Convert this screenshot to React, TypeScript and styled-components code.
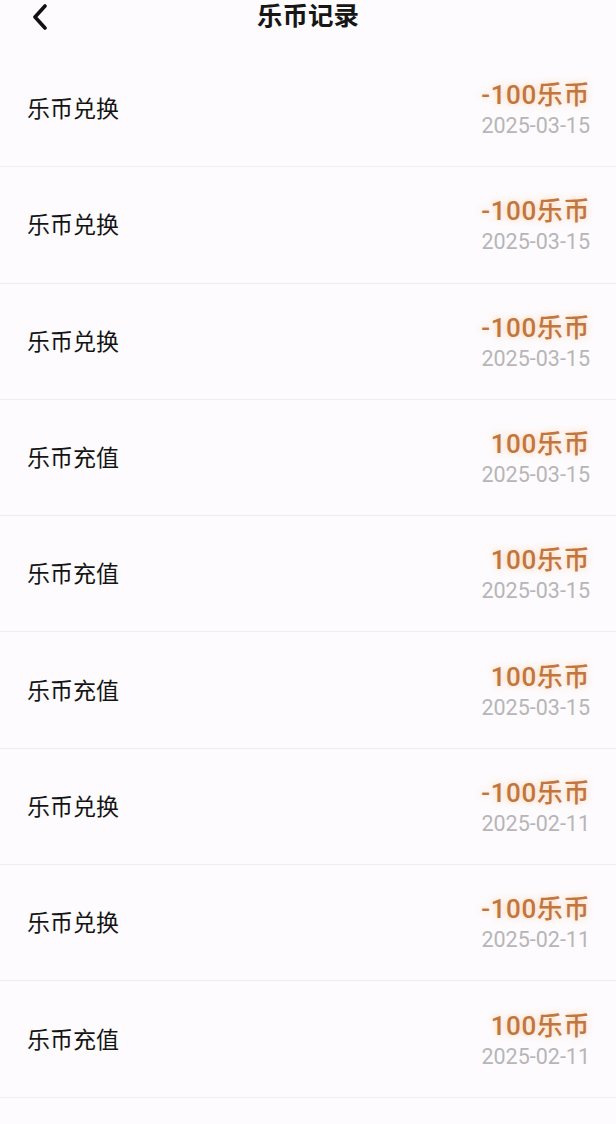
import React from "react";
import styled, { createGlobalStyle } from "styled-components";

const Global = createGlobalStyle`
  html, body { margin: 0; padding: 0; background: #fdfbfd; }
  body { font-family: Roboto, "Noto Sans CJK SC", sans-serif; }
`;

const Page = styled.div`
  width: 616px;
  min-height: 1124px;
  background: #fdfbfd;
  overflow: hidden;
`;

const Header = styled.header`
  position: relative;
  height: 51px;
  display: flex;
  align-items: flex-start;
  justify-content: center;
`;

const BackButton = styled.button`
  position: absolute;
  left: 26px;
  top: 2px;
  width: 28px;
  height: 30px;
  padding: 0;
  border: 0;
  background: transparent;
  display: flex;
  align-items: center;
  justify-content: center;
`;

const Title = styled.h1`
  margin: 0;
  font-family: "Noto Sans CJK SC", sans-serif;
  font-size: 25.5px;
  font-weight: 700;
  line-height: 27px;
  color: #161616;
`;

const List = styled.ul`
  list-style: none;
  margin: 0;
  padding: 0;
`;

const Row = styled.li`
  box-sizing: border-box;
  height: 116.3px;
  padding: 0 26px 0 27px;
  border-bottom: 1px solid #efedef;
  display: flex;
  align-items: center;
  justify-content: space-between;
`;

const Label = styled.span`
  font-family: "Noto Sans CJK SC", sans-serif;
  font-size: 23px;
  color: #141414;
  margin-top: -3px;
`;

const Right = styled.div`
  display: flex;
  flex-direction: column;
  align-items: flex-end;
  margin-top: 3px;
`;

const Amount = styled.span`
  font-family: Roboto, "Noto Sans CJK SC", sans-serif;
  font-size: 26px;
  font-weight: 500;
  letter-spacing: 0.6px;
  line-height: 32px;
  color: #c1753f;
  text-shadow: 0 0 6px rgba(255, 170, 80, 0.5);
`;

const DateText = styled.span`
  font-family: Roboto, sans-serif;
  font-size: 21.5px;
  line-height: 30px;
  color: #b7b5b7;
`;

type Rec = { label: string; amount: string; date: string };

const records: Rec[] = [
  { label: "乐币兑换", amount: "-100乐币", date: "2025-03-15" },
  { label: "乐币兑换", amount: "-100乐币", date: "2025-03-15" },
  { label: "乐币兑换", amount: "-100乐币", date: "2025-03-15" },
  { label: "乐币充值", amount: "100乐币", date: "2025-03-15" },
  { label: "乐币充值", amount: "100乐币", date: "2025-03-15" },
  { label: "乐币充值", amount: "100乐币", date: "2025-03-15" },
  { label: "乐币兑换", amount: "-100乐币", date: "2025-02-11" },
  { label: "乐币兑换", amount: "-100乐币", date: "2025-02-11" },
  { label: "乐币充值", amount: "100乐币", date: "2025-02-11" },
];

export default function App() {
  return (
    <Page>
      <Global />
      <Header>
        <BackButton aria-label="返回">
          <svg width="16" height="26" viewBox="0 0 16 26">
            <path d="M13 2 L3 13 L13 24" fill="none" stroke="#111" strokeWidth="3.6" strokeLinecap="round" strokeLinejoin="round" />
          </svg>
        </BackButton>
        <Title>乐币记录</Title>
      </Header>
      <List>
        {records.map((r, i) => (
          <Row key={i}>
            <Label>{r.label}</Label>
            <Right>
              <Amount>{r.amount}</Amount>
              <DateText>{r.date}</DateText>
            </Right>
          </Row>
        ))}
      </List>
    </Page>
  );
}
